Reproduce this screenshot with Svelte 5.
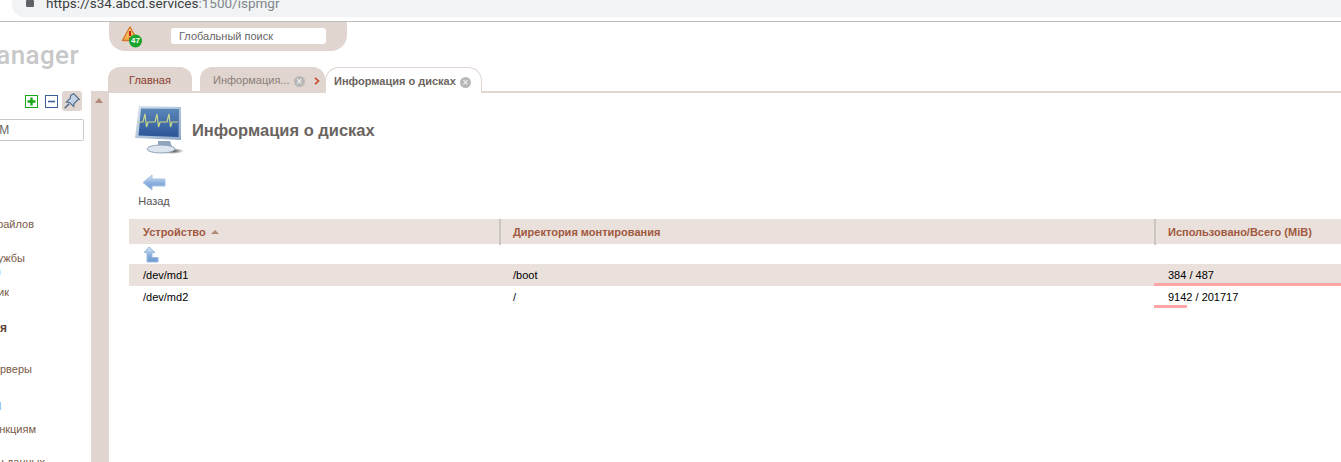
<script>
  // left menu is scrolled out of view, so entries are aligned to their right end
  const menu = [
    { label: "Менеджер файлов", end: 34, mt: 77 },
    { label: "Службы", end: 25, mt: 21 },
    { sliver: "#bfeaff", h: 5, mt: 5 },
    { label: "Планировщик", end: 9, mt: 11 },
    { label: "Конфигурация", end: 7, mt: 23, bold: true },
    { label: "DNS-серверы", end: 32, mt: 28 },
    { sliver: "#8fcbff", h: 8, mt: 26 },
    { label: "Доступ к функциям", end: 36, mt: 13 },
    { label: "Базы данных", end: 45, mt: 20 }
  ];

  const rows = [
    { dev: "/dev/md1", dir: "/boot", used: "384 / 487", bar: 187, odd: true },
    { dev: "/dev/md2", dir: "/", used: "9142 / 201717", bar: 33, odd: false }
  ];
</script>

<div class="browser">
  <div class="address">
    <svg class="lock" width="10" height="10" viewBox="0 0 10 10"><rect x="1" y="0" width="8" height="7" rx="1" fill="#5f6368" /></svg>
    <span class="url">https://s34.abcd.services<span class="port">:1500/ispmgr</span></span>
  </div>
</div>

<div class="page">
  <aside class="sidebar">
    <div class="logo">ispmanager</div>
    <div class="tools">
      <svg width="13" height="13" viewBox="0 0 13 13"><rect x="0.5" y="0.5" width="12" height="12" fill="#fff" stroke="#18a818" /><path d="M6.500 2.500v8M2.500 6.500h8" stroke="#18a818" stroke-width="2.400" /></svg>
      <svg class="minus" width="13" height="13" viewBox="0 0 13 13"><rect x="0.5" y="0.5" width="12" height="12" fill="#fff" stroke="#3c5f96" /><path d="M3 6.500h7" stroke="#3c5f96" stroke-width="1.600" /></svg>
      <span class="pin">
        <svg width="18" height="18" viewBox="0 0 16 16" fill="#c3d2e4" stroke="#4f6a8c" stroke-width="1"><path d="M9.500 1.500l5 5-1.500 .6-3.200 3.200-.3 2.600L5.800 9.300 3 9l3.300-3.200.6-2.800z" /><path d="M5.500 10.500L1.500 14.500" fill="none" stroke-width="1.400" /></svg>
      </span>
    </div>
    <div class="search"><span>ДМ</span></div>
    <nav>
      {#each menu as item}
        {#if item.sliver}
          <i class="sliver" style:background={item.sliver} style:height="{item.h}px" style:margin-top="{item.mt}px"></i>
        {:else}
          <div class="item" class:bold={item.bold} style:margin-top="{item.mt}px">
            <span style:width="{item.end}px"><b>{item.label}</b></span>
          </div>
        {/if}
      {/each}
    </nav>
  </aside>

  <main>
    <div class="topbar">
      <svg class="alert" width="24" height="24" viewBox="0 0 24 24">
        <defs><linearGradient id="warn" x1="0" y1="0" x2="0" y2="1"><stop offset="0" stop-color="#fde98a" /><stop offset="1" stop-color="#f3a63a" /></linearGradient></defs>
        <path d="M9 2L1.500 15.500h15z" fill="url(#warn)" stroke="#d9742a" stroke-width="1.400" stroke-linejoin="round" />
        <path d="M9 6v5" stroke="#c8201c" stroke-width="2.200" />
        <circle cx="9" cy="13.300" r="1.100" fill="#c8201c" />
        <circle cx="14.500" cy="16" r="6.500" fill="#1ca52c" />
      </svg>
      <span class="count">47</span>
      <div class="global">Глобальный поиск</div>
    </div>

    <div class="tabs">
      <div class="tab home">Главная</div>
      <div class="tab info">
        Информация...
        <span class="close">×</span>
      </div>
      <span class="chev">
        <svg width="6" height="8" viewBox="0 0 6 8"><path d="M1 .8l3.500 3.200-3.500 3.200" fill="none" stroke="#c8492c" stroke-width="1.600" /></svg>
      </span>
      <div class="tab active">
        Информация о дисках
        <span class="close">×</span>
      </div>
    </div>

    <div class="body">
      <div class="strip"><i></i></div>
      <div class="content">
        <div class="title">
          <svg width="52" height="50" viewBox="0 0 52 50">
            <defs>
              <linearGradient id="scr" x1="0" y1="0" x2="0" y2="1"><stop offset="0" stop-color="#5a87b8" /><stop offset="1" stop-color="#2b5596" /></linearGradient>
              <linearGradient id="frm" x1="0" y1="0" x2="1" y2="1"><stop offset="0" stop-color="#d7e3ef" /><stop offset="1" stop-color="#8ea8c6" /></linearGradient>
              <radialGradient id="shd"><stop offset="0" stop-color="#333" /><stop offset="1" stop-color="#333" stop-opacity="0" /></radialGradient>
            </defs>
            <ellipse cx="38" cy="46" rx="12" ry="3" fill="url(#shd)" />
            <path d="M24 36h12l2 6H24z" fill="#8fa6bd" />
            <ellipse cx="27" cy="44" rx="14" ry="4" fill="#dde6ee" stroke="#8ea4ba" />
            <path d="M5 1l42 1v33L1 33z" fill="url(#frm)" />
            <path d="M7 3.500l38 .5-.5 28L4.500 30.500z" fill="url(#scr)" />
            <path d="M4 17h5l2-8 1.500 13 1.500-5h7l2-8 1.500 13 1.500-5h7l2-8 1.500 13 1.500-5h6" fill="none" stroke="#c9d68c" stroke-width="1.200" />
          </svg>
          <h1>Информация о дисках</h1>
        </div>

        <div class="back">
          <svg width="24" height="18" viewBox="0 0 24 18">
            <defs><linearGradient id="arr" x1="0" y1="0" x2="0" y2="1"><stop offset="0" stop-color="#dce9f8" /><stop offset=".5" stop-color="#8fb3df" /><stop offset="1" stop-color="#6d97cc" /></linearGradient></defs>
            <path d="M10 1L1 8.500l9 7.500v-4h13V5H10z" fill="url(#arr)" stroke="#a9c3e4" stroke-linejoin="round" />
          </svg>
          <span>Назад</span>
        </div>

        <div class="table">
          <div class="row head">
            <div>Устройство <i class="sort"></i></div>
            <div class="sep">Директория монтирования</div>
            <div class="sep">Использовано/Всего (MiB)</div>
          </div>
          <div class="up">
            <svg width="16" height="17" viewBox="0 0 16 17">
              <path d="M6 1L1 6.500h3V16h11v-4.500H9V6.500h3z" fill="url(#arr)" stroke="#9dbbe0" stroke-linejoin="round" />
            </svg>
          </div>
          {#each rows as row}
            <div class="row line" class:odd={row.odd}>
              <div>{row.dev}</div>
              <div>{row.dir}</div>
              <div class="used">{row.used}<i class="bar" style:width="{row.bar}px"></i></div>
            </div>
          {/each}
        </div>
      </div>
    </div>
  </main>
</div>

<style>
  :global(body) {
    margin: 0;
    background: #fff;
    overflow: hidden;
    font-family: "Liberation Sans", Arial, sans-serif;
    font-size: 11px;
  }

  .browser {
    height: 21px;
    border-bottom: 1px solid #bdbdbd;
    overflow: hidden;
  }

  .address {
    height: 17px;
    margin-left: 12px;
    background: #f1f3f4;
    border-radius: 0 0 0 12px;
    display: flex;
    align-items: flex-end;
    padding: 0 0 6px 13px;
    box-sizing: border-box;
  }

  .lock {
    flex: none;
    margin-bottom: 1px;
  }

  .url {
    margin-left: 11px;
    font-family: Roboto, sans-serif;
    font-size: 13.5px;
    line-height: 16px;
    color: #3c4043;
  }

  .port {
    color: #80868b;
  }

  .page {
    display: flex;
    height: 440px;
    overflow: hidden;
  }

  .sidebar {
    width: 91px;
    flex: none;
    overflow: hidden;
  }

  .logo {
    height: 66px;
    line-height: 66px;
    font-family: Roboto, sans-serif;
    font-size: 26px;
    font-weight: 500;
    letter-spacing: 0.4px;
    color: #c8c8c8;
    white-space: nowrap;
    display: flex;
    justify-content: flex-end;
    padding-right: 12px;
  }

  .tools {
    display: flex;
    align-items: center;
    justify-content: flex-end;
    height: 20px;
    margin-top: 3px;
    padding-right: 9px;
  }

  .tools svg {
    display: block;
  }

  .minus {
    margin: 0 4px 0 7px;
  }

  .pin {
    width: 20px;
    height: 20px;
    background: #e0d5cf;
    border-radius: 3px;
    display: flex;
    align-items: center;
    justify-content: center;
  }

  .search {
    height: 22px;
    width: 84px;
    margin-top: 8px;
    box-sizing: border-box;
    border: 1px solid #c9c9c9;
    border-left: none;
    border-radius: 0 2px 2px 0;
    line-height: 20px;
    font-size: 12px;
    color: #666;
    overflow: hidden;
    display: flex;
    justify-content: flex-start;
  }

  .search span {
    margin-left: -9px;
  }

  nav {
    display: flex;
    flex-direction: column;
  }

  .item {
    height: 13px;
    line-height: 13px;
    color: #7a5a48;
  }

  .item span {
    display: flex;
    justify-content: flex-end;
    overflow: hidden;
    white-space: nowrap;
  }

  .item b {
    font-weight: normal;
    flex: none;
  }

  .item.bold b {
    font-weight: bold;
    font-size: 12px;
    color: #5a4238;
  }

  .sliver {
    display: block;
    width: 1px;
  }

  main {
    flex: 1;
    min-width: 0;
    display: flex;
    flex-direction: column;
  }

  .topbar {
    position: relative;
    width: 238px;
    height: 29px;
    margin-left: 18px;
    background: #e0d5cf;
    border-radius: 0 0 16px 16px;
    display: flex;
    align-items: flex-start;
    box-sizing: border-box;
  }

  .alert {
    position: absolute;
    left: 12px;
    top: 3px;
  }

  .count {
    position: absolute;
    left: 20px;
    top: 13px;
    width: 13px;
    text-align: center;
    color: #fff;
    font-size: 8px;
    line-height: 11px;
    font-weight: bold;
  }

  .global {
    width: 155px;
    height: 16px;
    margin: 6px 0 0 62px;
    box-sizing: border-box;
    background: #fff;
    border-radius: 3px;
    padding-left: 8px;
    line-height: 16px;
    color: #666;
  }

  .tabs {
    display: flex;
    align-items: flex-end;
    height: 42px;
    padding-left: 17px;
    border-bottom: 2px solid #e0d5cf;
    box-sizing: border-box;
  }

  .tab {
    height: 25px;
    line-height: 26px;
    box-sizing: border-box;
    border-radius: 12px 12px 0 0;
    background: #e0d5cf;
    white-space: nowrap;
  }

  .home {
    width: 84px;
    text-align: center;
    color: #8a3b2c;
    margin-bottom: -1px;
  }

  .info {
    width: 125px;
    margin: 0 0 -1px 8px;
    padding-left: 13px;
    color: #8c7f7a;
    position: relative;
  }

  .chev {
    margin: 0 0 6px -11px;
    width: 11px;
    position: relative;
    display: flex;
  }

  .active {
    height: 26px;
    line-height: 26px;
    width: 157px;
    margin-bottom: -2px;
    padding-left: 8px;
    background: #fff;
    border: 1px solid #e0d5cf;
    border-bottom: none;
    font-weight: bold;
    color: #6b6460;
    border-radius: 14px 14px 0 0;
  }

  .close {
    display: inline-block;
    width: 11px;
    height: 11px;
    margin-left: 1px;
    border-radius: 50%;
    background: #b8b8b8;
    color: #fff;
    text-align: center;
    font-size: 10px;
    line-height: 11px;
    font-weight: normal;
    vertical-align: -1px;
  }

  .body {
    flex: 1;
    display: flex;
    min-height: 0;
  }

  .strip {
    width: 18px;
    flex: none;
    background: #e0d5cf;
    margin-top: -2px;
  }

  .strip i {
    display: block;
    width: 0;
    height: 0;
    margin: 7px 0 0 4px;
    border: 5px solid transparent;
    border-top: none;
    border-left-width: 4px;
    border-right-width: 4px;
    border-bottom-color: #b08a76;
  }

  .content {
    flex: 1;
    min-width: 0;
    padding-left: 20px;
    overflow: hidden;
  }

  .title {
    display: flex;
    align-items: center;
    height: 50px;
    margin-top: 13px;
    padding-left: 5px;
  }

  .title svg {
    margin-top: -2px;
  }

  h1 {
    margin: -2px 0 0 6px;
    font-size: 16.5px;
    font-weight: bold;
    color: #6a6460;
  }

  .back {
    width: 50px;
    margin-top: 18px;
    display: flex;
    flex-direction: column;
    align-items: center;
    color: #555;
  }

  .back span {
    margin-top: 3px;
    line-height: 13px;
  }

  .table {
    margin-top: 11px;
  }

  .row {
    display: grid;
    grid-template-columns: 370px 655px 1fr;
  }

  .head {
    height: 25px;
    background: #ebe1dc;
    line-height: 26px;
    font-weight: bold;
    color: #a0593f;
  }

  .head > div {
    padding-left: 14px;
    white-space: nowrap;
  }

  .head .sep {
    border-left: 2px solid #c9c6c4;
    padding-left: 12px;
  }

  .sort {
    display: inline-block;
    width: 0;
    height: 0;
    margin-left: 2px;
    vertical-align: 2px;
    border: 4px solid transparent;
    border-top: none;
    border-bottom-color: #b08a76;
  }

  .up {
    height: 20px;
    padding: 2px 0 0 14px;
    box-sizing: border-box;
  }

  .up svg {
    display: block;
  }

  .line {
    height: 22px;
    line-height: 22px;
    color: #000;
  }

  .line.odd {
    background: #ebe1dc;
  }

  .line > div {
    padding-left: 14px;
    position: relative;
    white-space: nowrap;
  }

  .bar {
    position: absolute;
    left: 0;
    bottom: 0;
    height: 3px;
    background: #ffa5a5;
  }
</style>
